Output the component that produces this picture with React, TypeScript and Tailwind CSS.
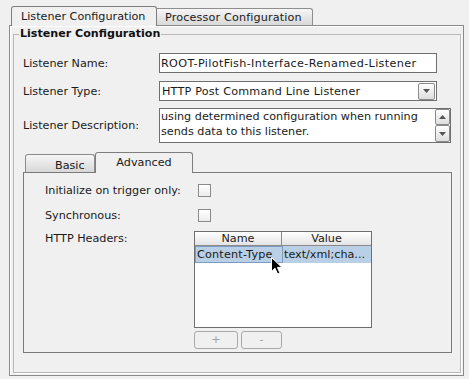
export default function App() {
  return (
    <div className="w-[469px] h-[379px] bg-[#f0f0f0] pt-[6px] pl-[9px] text-[11.2px] leading-[14px] text-[#1a1a1a] font-['DejaVu_Sans',sans-serif] overflow-hidden">
      {/* top tabs */}
      <div className="flex items-end h-[19px] pl-[2px]">
        <div className="relative z-10 -mb-px h-[20px] w-[146px] border border-b-0 border-[#7e7e7e] rounded-t-[3px] bg-[#f0f0f0] pl-[9px] pt-[3px] whitespace-nowrap">
          Listener Configuration
        </div>
        <div className="h-[17px] w-[156px] border border-l-0 border-b-0 border-[#8e8e8e] rounded-tr-[3px] bg-gradient-to-b from-[#f6f6f6] to-[#d8d8d8] pl-[8px] pt-[2px] whitespace-nowrap tracking-[0.15px]">
          Processor Configuration
        </div>
      </div>
      {/* outer panel */}
      <div className="w-[455px] h-[351px] border border-[#8a8a8a] shadow-[inset_1px_1px_0_#ffffff] flex flex-col pl-[3px] pr-[2px] pt-[1px] pb-[2px]">
        <fieldset className="flex-1 border border-[#b8b8b8] shadow-[1px_1px_0_#ffffff]">
          <legend className="ml-[5px] px-[1px] text-[11.1px] font-bold text-[#111111] whitespace-nowrap">Listener Configuration</legend>
          <div className="pl-[9px] pt-[12px] flex flex-col">
            {/* name */}
            <div className="flex items-center h-[20px]">
              <div className="w-[136px] whitespace-nowrap pt-px">Listener Name:</div>
              <div className="w-[278px] h-[20px] border border-[#6f6f6f] bg-white pl-[1px] pt-px flex items-center whitespace-nowrap overflow-hidden tracking-[0.35px]">
                ROOT-PilotFish-Interface-Renamed-Listener
              </div>
            </div>
            {/* type */}
            <div className="flex items-center h-[20px] mt-[8px]">
              <div className="w-[136px] whitespace-nowrap pt-px">Listener Type:</div>
              <div className="w-[278px] h-[20px] border border-[#6f6f6f] bg-white flex items-center">
                <div className="pl-[2px] pt-px whitespace-nowrap flex-1 tracking-[0.2px]">HTTP Post Command Line Listener</div>
                <div className="w-[17px] h-[17px] mr-px border border-[#8a8a8a] rounded-[2px] bg-gradient-to-b from-[#ffffff] to-[#dedede] flex items-center justify-center">
                  <svg width="7" height="4" viewBox="0 0 7 4"><path d="M0 0 H7 L3.5 4 Z" fill="#555555" /></svg>
                </div>
              </div>
            </div>
            {/* description */}
            <div className="flex items-center h-[35px] mt-[7px]">
              <div className="w-[136px] whitespace-nowrap">Listener Description:</div>
              <div className="w-[292px] h-[35px] border border-[#6f6f6f] bg-white flex">
                <div className="flex-1 pl-[1px] leading-[15px] whitespace-nowrap overflow-hidden">
                  <div>using determined configuration when running</div>
                  <div>sends data to this listener.</div>
                </div>
                <div className="w-[15px] flex flex-col">
                  <div className="h-[16px] border border-[#8a8a8a] rounded-[2px] bg-gradient-to-b from-[#ffffff] to-[#dedede] flex items-center justify-center">
                    <svg width="7" height="4" viewBox="0 0 7 4"><path d="M0 4 H7 L3.5 0 Z" fill="#555555" /></svg>
                  </div>
                  <div className="flex-1 border border-[#8a8a8a] rounded-[2px] bg-gradient-to-b from-[#ffffff] to-[#dedede] flex items-center justify-center">
                    <svg width="7" height="4" viewBox="0 0 7 4"><path d="M0 0 H7 L3.5 4 Z" fill="#555555" /></svg>
                  </div>
                </div>
              </div>
            </div>
            {/* inner tabs */}
            <div className="mt-[9px] flex items-end h-[20px] pl-[2px]">
              <div className="h-[18px] w-[70px] border border-b-0 border-[#8a8a8a] rounded-t-[3px] bg-gradient-to-b from-[#f6f6f6] to-[#d8d8d8] pl-[29px] pt-[4px] whitespace-nowrap">
                Basic
              </div>
              <div className="relative z-10 -mb-px h-[21px] w-[98px] border border-b-0 border-[#7e7e7e] rounded-t-[3px] bg-[#f0f0f0] text-center pt-[3px] whitespace-nowrap">
                Advanced
              </div>
            </div>
            <div className="w-[429px] h-[181px] border border-[#7a7a7a] pl-[21px] pt-[11px] flex flex-col">
              <div className="flex items-center h-[13px]">
                <div className="w-[149px] whitespace-nowrap">Initialize on trigger only:</div>
                <div className="ml-[4px] w-[13px] h-[13px] border border-[#8a8a8a] bg-gradient-to-b from-[#ffffff] to-[#ececec]" />
              </div>
              <div className="flex items-center h-[13px] mt-[12px]">
                <div className="w-[149px] whitespace-nowrap">Synchronous:</div>
                <div className="ml-[4px] w-[13px] h-[13px] border border-[#8a8a8a] bg-gradient-to-b from-[#ffffff] to-[#ececec]" />
              </div>
              <div className="flex items-start mt-[9px]">
                <div className="w-[149px] whitespace-nowrap pt-[1px]">HTTP Headers:</div>
                <div className="flex flex-col">
                  <div className="w-[178px] h-[97px] border border-[#6f6f6f] bg-white flex flex-col">
                    <div className="flex h-[14px] border-b border-[#8a8a8a] bg-gradient-to-b from-[#ffffff] to-[#e4e4e4]">
                      <div className="w-[87px] border-r border-[#8a8a8a] text-center leading-[13px]">Name</div>
                      <div className="flex-1 text-center leading-[13px]">Value</div>
                    </div>
                    <div className="flex h-[17px] bg-[#b8cfe5]">
                      <div className="relative w-[88px] border border-[#7d9cc2] pl-px leading-[15px] whitespace-nowrap overflow-visible tracking-[0.2px]">
                        Content-Type
                        <svg className="absolute left-[75px] top-[10px]" width="12" height="18" viewBox="0 0 12 18">
                          <path d="M0.5 0.5 V14.5 L4 11.2 L6.6 17 L8.9 16 L6.4 10.4 H11 Z" fill="#000000" stroke="#ffffff" strokeWidth="1" />
                        </svg>
                      </div>
                      <div className="flex-1 pl-[1px] leading-[17px] whitespace-nowrap overflow-hidden">text/xml;cha...</div>
                    </div>
                  </div>
                  <div className="flex mt-[3px]">
                    <div className="w-[44px] h-[18px] border border-[#a8a8a8] rounded-[3px] text-[#a0a0a0] flex items-center justify-center">+</div>
                    <div className="ml-[3px] w-[41px] h-[18px] border border-[#a8a8a8] rounded-[3px] text-[#a0a0a0] flex items-center justify-center">-</div>
                  </div>
                </div>
              </div>
            </div>
          </div>
        </fieldset>
      </div>
    </div>
  );
}
